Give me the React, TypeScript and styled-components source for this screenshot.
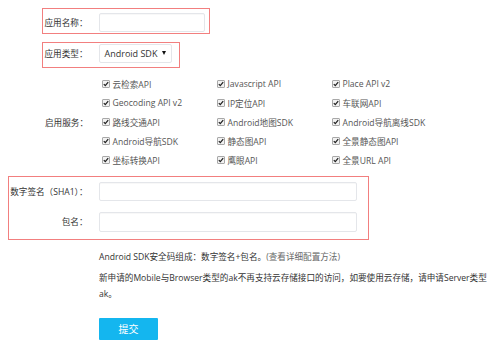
import React from 'react';
import styled, { createGlobalStyle } from 'styled-components';

const GlobalStyle = createGlobalStyle`
  html, body {
    margin: 0;
    padding: 0;
    background: #ffffff;
  }
  body {
    font-family: "Open Sans", "Noto Sans CJK SC", sans-serif;
    font-size: 8.6px;
    color: #333333;
  }
`;

const Page = styled.div`
  padding-top: 8px;
  width: 494px;
`;

// red annotation box around a group of rows
const Highlight = styled.div<{ $left: number; $width: number; $height: number; $pad: string; $top?: number }>`
  box-sizing: border-box;
  margin: ${(p) => p.$top || 0}px 0 0 ${(p) => p.$left}px;
  width: ${(p) => p.$width}px;
  height: ${(p) => p.$height}px;
  padding: ${(p) => p.$pad};
  border: 1.5px solid #f27f7f;
  display: flex;
  flex-direction: column;
`;

const Row = styled.div<{ $labelWidth: number; $gap?: number }>`
  display: grid;
  grid-template-columns: ${(p) => p.$labelWidth}px auto;
  column-gap: 11px;
  align-items: center;
  margin-top: ${(p) => p.$gap || 0}px;
`;

const Label = styled.div`
  display: flex;
  justify-content: flex-end;
  white-space: nowrap;
  color: #333333;
`;

const TextInput = styled.div<{ $width: number }>`
  box-sizing: border-box;
  width: ${(p) => p.$width}px;
  height: 19.5px;
  border: 1px solid #e4e6ea;
  border-radius: 2px;
  background: #ffffff;
  box-shadow: inset 0 1px 1px rgba(0, 0, 0, 0.03);
`;

const Select = styled.div`
  box-sizing: border-box;
  width: 73px;
  height: 19px;
  border: 1px solid #e4e6ea;
  border-radius: 2px;
  display: flex;
  align-items: center;
  justify-content: space-between;
  padding: 0 5px 0 5px;
  color: #333333;
  font-size: 9px;
`;

const Arrow = styled.span`
  width: 0;
  height: 0;
  border-left: 2.5px solid transparent;
  border-right: 2.5px solid transparent;
  border-top: 4px solid #111111;
`;

const Services = styled.div`
  display: grid;
  grid-template-columns: 88px auto;
  column-gap: 14px;
  align-items: center;
  margin-top: 6.5px;
`;

const CheckGrid = styled.div`
  display: grid;
  grid-template-columns: repeat(3, 115px);
  grid-auto-rows: 19px;
  align-items: center;
`;

const CheckItem = styled.div`
  display: flex;
  align-items: center;
  gap: 2.5px;
  color: #555555;
  white-space: nowrap;
`;

const Box = styled.span`
  box-sizing: border-box;
  width: 8px;
  height: 8px;
  border: 1px solid #a8a8a8;
  border-radius: 1px;
  background: #f2f2f2;
  display: flex;
  align-items: center;
  justify-content: center;
`;

const Notes = styled.div`
  margin: 8.5px 0 0 99px;
  width: 392px;
  line-height: 16px;
`;

const Note = styled.p`
  margin: 0 0 5px 0;
  color: #333333;
`;

const Hint = styled.span`
  color: #666666;
`;

const Submit = styled.button`
  margin: 11px 0 0 99px;
  width: 59px;
  height: 22px;
  border: none;
  border-radius: 1px;
  background: #14b6ef;
  color: #ffffff;
  font-family: "Open Sans", "Noto Sans CJK SC", sans-serif;
  font-size: 10px;
  padding: 0;
`;

const services = [
  '云检索API',
  'Javascript API',
  'Place API v2',
  'Geocoding API v2',
  'IP定位API',
  '车联网API',
  '路线交通API',
  'Android地图SDK',
  'Android导航离线SDK',
  'Android导航SDK',
  '静态图API',
  '全景静态图API',
  '坐标转换API',
  '鹰眼API',
  '全景URL API',
];

const Check = () => (
  <Box>
    <svg width="6" height="6" viewBox="0 0 6 6">
      <path d="M0.8 3.1 L2.3 4.6 L5.2 1.2" fill="none" stroke="#222" strokeWidth="1.3" />
    </svg>
  </Box>
);

export default function App() {
  return (
    <Page>
      <GlobalStyle />
      <Highlight $left={42} $width={168} $height={26} $pad="3.5px 0 0 0">
        <Row $labelWidth={44.5}>
          <Label>应用名称：</Label>
          <TextInput $width={106} />
        </Row>
      </Highlight>
      <Highlight $left={42} $width={138} $height={26} $pad="0.5px 0 0 0" $top={8}>
        <Row $labelWidth={44.5}>
          <Label>应用类型：</Label>
          <Select>
            Android SDK
            <Arrow />
          </Select>
        </Row>
      </Highlight>
      <Services>
        <Label>启用服务：</Label>
        <CheckGrid>
          {services.map((name) => (
            <CheckItem key={name}>
              <Check />
              {name}
            </CheckItem>
          ))}
        </CheckGrid>
      </Services>
      <Highlight $left={8} $width={361} $height={64} $pad="4.5px 0 0 0" $top={6.5}>
        <Row $labelWidth={78.5}>
          <Label>数字签名（SHA1）：</Label>
          <TextInput $width={258} />
        </Row>
        <Row $labelWidth={78.5} $gap={11}>
          <Label>包名：</Label>
          <TextInput $width={258} />
        </Row>
      </Highlight>
      <Notes>
        <Note>
          Android SDK安全码组成：数字签名+包名。<Hint>(查看详细配置方法)</Hint>
        </Note>
        <Note>
          新申请的Mobile与Browser类型的ak不再支持云存储接口的访问，如要使用云存储，请申请Server类型ak。
        </Note>
      </Notes>
      <Submit>提交</Submit>
    </Page>
  );
}
